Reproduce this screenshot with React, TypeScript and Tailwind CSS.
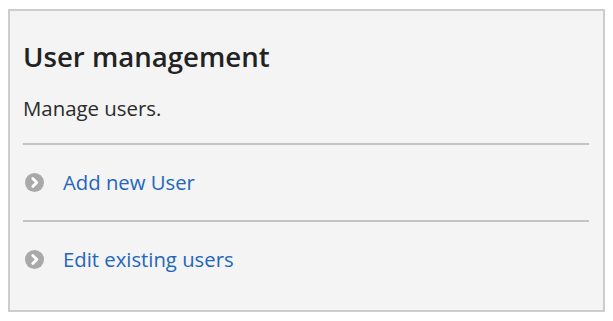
const links = ['Add new User', 'Edit existing users'];

const ChevronCircle = () => (
  <svg width="19" height="19" viewBox="0 0 19 19" className="ml-[2px] flex-shrink-0">
    <circle cx="9.5" cy="9.5" r="9.5" fill="#a9a9a9" />
    <path d="M7.8 5.4 L11.8 9.5 L7.8 13.6" fill="none" stroke="#ffffff" strokeWidth="2.8" strokeLinecap="round" strokeLinejoin="round" />
  </svg>
);

export default function App() {
  return (
    <div className="min-h-[321px] bg-white pt-[9px] pl-2" style={{ fontFamily: '"Open Sans", "Liberation Sans", sans-serif' }}>
      <div className="w-[597px] border-2 border-[#cdcdcd] bg-[#f4f4f4] pt-[29px] pb-[37px] pl-[13px] pr-[14px]">
        <h2 className="text-[27.6px] leading-[32px] font-semibold text-[#222222]">User management</h2>
        <p className="mt-[22px] mb-[21px] text-[20.4px] leading-[28px] text-[#2b2b2b]">Manage users.</p>

        {links.map((label, index) => (
          <div
            key={label}
            className={`border-t-2 border-[#c4c4c4] pt-[23px] flex items-center gap-[19px] ${index === 0 ? 'pb-[24px]' : ''}`}
          >
            <ChevronCircle />
            <a href="#" className="text-[20.3px] leading-[28px] text-[#2366ba]">
              {label}
            </a>
          </div>
        ))}
      </div>
    </div>
  );
}
